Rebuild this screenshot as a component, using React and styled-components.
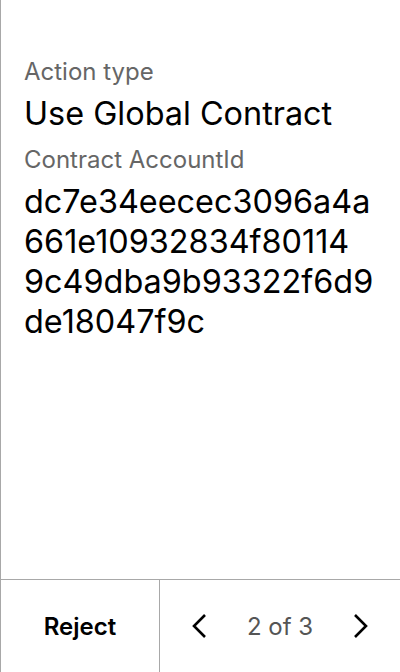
import React from 'react';
import styled, { createGlobalStyle } from 'styled-components';

const GlobalStyle = createGlobalStyle`
  html, body {
    margin: 0;
    padding: 0;
    background: #ffffff;
  }
  body {
    font-family: Inter, "Noto Sans", sans-serif;
    -webkit-font-smoothing: antialiased;
  }
`;

const Screen = styled.div`
  width: 400px;
  height: 672px;
  box-sizing: border-box;
  border-left: 1px solid #a8a8a8;
  display: flex;
  flex-direction: column;
`;

const Body = styled.div`
  flex: 1;
  padding: 56px 20px 0 23px;
  display: flex;
  flex-direction: column;
`;

const Label = styled.div`
  font-size: 24px;
  line-height: 32px;
  color: #666666;
`;

const Value = styled.div`
  font-size: 32.4px;
  line-height: 40px;
  color: #000000;
  margin: 6px 0 10px;
`;

const HashLine = styled.div`
  white-space: nowrap;
`;

const Footer = styled.div`
  height: 92px;
  display: grid;
  grid-template-columns: 159px 1fr;
  border-top: 1px solid #a8a8a8;
`;

const RejectButton = styled.button`
  border: none;
  border-right: 1px solid #a8a8a8;
  background: transparent;
  font-family: inherit;
  font-size: 24px;
  font-weight: 600;
  color: #000000;
  cursor: pointer;
`;

const Pager = styled.div`
  display: flex;
  align-items: center;
  justify-content: space-between;
  padding: 0 26px;
`;

const ArrowButton = styled.button`
  border: none;
  background: transparent;
  padding: 0;
  width: 28px;
  height: 28px;
  display: flex;
  align-items: center;
  justify-content: center;
  cursor: pointer;
`;

const PageText = styled.span`
  font-size: 24px;
  color: #555555;
`;

const Chevron = ({ dir }) => (
  <svg width="16" height="24" viewBox="0 0 16 24" fill="none">
    <path
      d={dir === 'left' ? 'M13 1 L2 12 L13 23' : 'M3 1 L14 12 L3 23'}
      stroke="#000"
      strokeWidth="2.6"
      strokeLinecap="butt"
      strokeLinejoin="miter"
    />
  </svg>
);

const contractId = 'dc7e34eecec3096a4a661e10932834f801149c49dba9b93322f6d9de18047f9c';

// split the id into fixed-size rows so it wraps the same way everywhere
const chunk = (str, size) => str.match(new RegExp(`.{1,${size}}`, 'g')) || [];

export default function App() {
  return (
    <>
      <GlobalStyle />
      <Screen>
        <Body>
          <Label>Action type</Label>
          <Value>Use Global Contract</Value>
          <Label>Contract AccountId</Label>
          <Value>
            {chunk(contractId, 18).map((part, i) => (
              <HashLine key={i}>{part}</HashLine>
            ))}
          </Value>
        </Body>
        <Footer>
          <RejectButton>Reject</RejectButton>
          <Pager>
            <ArrowButton aria-label="Previous"><Chevron dir="left" /></ArrowButton>
            <PageText>2 of 3</PageText>
            <ArrowButton aria-label="Next"><Chevron dir="right" /></ArrowButton>
          </Pager>
        </Footer>
      </Screen>
    </>
  );
}
